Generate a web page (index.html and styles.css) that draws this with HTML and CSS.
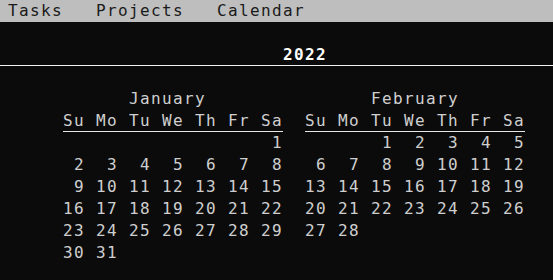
FILE: index.html
```html
<!DOCTYPE html>
<html lang="en">
<head>
    <meta charset="UTF-8">
    <meta name="viewport" content="width=device-width, initial-scale=1.0">
    <title>Calendar</title>
    <link rel="stylesheet" href="styles.css">
</head>
<body>

    <div class="menu">
        <span>Tasks</span>
        <span>Projects</span>
        <span>Calendar</span>
    </div>

    <div class="year-row">
        <span class="year">2022</span>
    </div>

    <div class="months">
        <div class="month">
            <div class="month-name">January</div>
            <div class="weekdays">
                <span>Su</span><span>Mo</span><span>Tu</span><span>We</span><span>Th</span><span>Fr</span><span>Sa</span>
            </div>
            <div class="days">
                <span></span><span></span><span></span><span></span><span></span><span></span><span>1</span>
                <span>2</span><span>3</span><span>4</span><span>5</span><span>6</span><span>7</span><span>8</span>
                <span>9</span><span>10</span><span>11</span><span>12</span><span>13</span><span>14</span><span>15</span>
                <span>16</span><span>17</span><span>18</span><span>19</span><span>20</span><span>21</span><span>22</span>
                <span>23</span><span>24</span><span>25</span><span>26</span><span>27</span><span>28</span><span>29</span>
                <span>30</span><span>31</span>
            </div>
        </div>

        <div class="month">
            <div class="month-name">February</div>
            <div class="weekdays">
                <span>Su</span><span>Mo</span><span>Tu</span><span>We</span><span>Th</span><span>Fr</span><span>Sa</span>
            </div>
            <div class="days">
                <span></span><span></span><span>1</span><span>2</span><span>3</span><span>4</span><span>5</span>
                <span>6</span><span>7</span><span>8</span><span>9</span><span>10</span><span>11</span><span>12</span>
                <span>13</span><span>14</span><span>15</span><span>16</span><span>17</span><span>18</span><span>19</span>
                <span>20</span><span>21</span><span>22</span><span>23</span><span>24</span><span>25</span><span>26</span>
                <span>27</span><span>28</span>
            </div>
        </div>
    </div>

</body>
</html>
```

FILE: styles.css
```css
* {
    margin: 0;
    padding: 0;
    box-sizing: border-box;
}

body {
    font-family: "DejaVu Sans Mono", "Liberation Mono", monospace;
    font-size: 16px;
    letter-spacing: 1.37px;
    line-height: 22px;
    background-color: #0b0b0b;
    color: #cfcfcf;
    height: 100vh;
    overflow: hidden;
}

.menu {
    display: flex;
    gap: 33px;
    height: 22px;
    padding: 0 8px;
    background-color: #bebebe;
    color: #1a1a1a;
}

.year-row {
    margin-top: 22px;
    height: 22px;
    line-height: 21px;
    padding-left: 283px;
    border-bottom: 1px solid #f2f2f2;
}

.year {
    font-weight: bold;
    color: #ffffff;
}

.months {
    display: flex;
    gap: 22px;
    margin-top: 22px;
    padding-left: 63px;
}

.month {
    width: 220px;
}

.month-name {
    padding-left: 66px;
    height: 22px;
}

.weekdays,
.days {
    display: grid;
    grid-template-columns: repeat(7, 22px);
    column-gap: 11px;
}

.weekdays {
    height: 22px;
    border-bottom: 1px solid #e6e6e6;
}

.days span {
    text-align: right;
    height: 22px;
}
```
